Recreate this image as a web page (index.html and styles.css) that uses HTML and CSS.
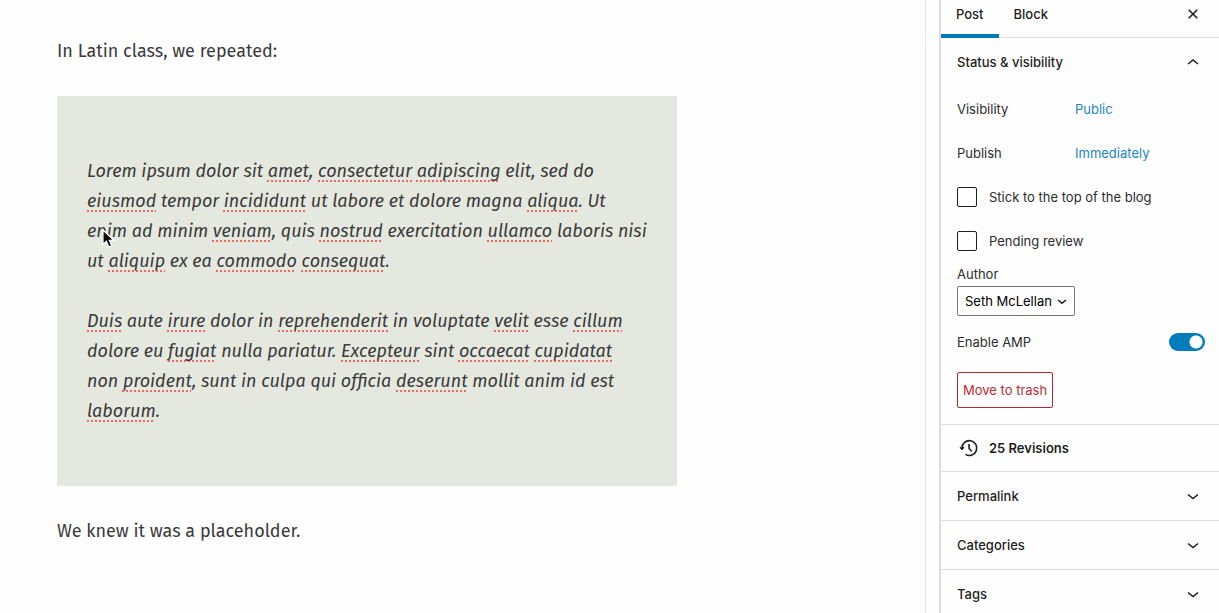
FILE: index.html
```html
<!DOCTYPE html>
<html lang="en">
<head>
<meta charset="utf-8">
<title>Edit Post</title>
<link rel="stylesheet" href="styles.css">
</head>
<body>
<div class="editor">
  <main class="canvas">
    <p class="para">In Latin class, we repeated:</p>
    <blockquote class="quote">
      <p class="quote-text">Lorem ipsum dolor sit <u>amet</u>, <u>consectetur</u> <u>adipiscing</u> elit, sed do<br><u>eiusmod</u> tempor <u>incididunt</u> ut labore et dolore magna <u>aliqua</u>. Ut<br>enim ad minim <u>veniam</u>, quis <u>nostrud</u> exercitation <u>ullamco</u> laboris nisi<br>ut <u>aliquip</u> ex ea <u>commodo</u> <u>consequat</u>.</p>
      <p class="quote-text"><u>Duis</u> aute <u>irure</u> dolor in <u>reprehenderit</u> in voluptate <u>velit</u> esse <u>cillum</u><br>dolore eu <u>fugiat</u> nulla pariatur. <u>Excepteur</u> sint <u>occaecat</u> <u>cupidatat</u><br>non <u>proident</u>, sunt in culpa qui officia <u>deserunt</u> mollit anim id est<br><u>laborum</u>.</p>
      <svg class="pointer" width="14" height="20" viewBox="0 0 14 20" aria-hidden="true"><path d="M2 1v14.500l3.400-3.200 2.400 5.600 2.900-1.200-2.400-5.400h4.500z" fill="#000" stroke="#fff" stroke-width="1.200"/></svg>
    </blockquote>
    <p class="para">We knew it was a placeholder.</p>
  </main>
  <aside class="sidebar">
    <header class="tabs">
      <button class="tab tab-active" type="button">Post</button>
      <button class="tab" type="button">Block</button>
      <button class="close" type="button" aria-label="Close settings"><svg width="12" height="12" viewBox="0 0 12 12"><path d="M1.700 1.700l8.600 8.600M10.300 1.700l-8.600 8.600"/></svg></button>
    </header>
    <section class="status">
      <button class="panel-title" type="button" aria-expanded="true">Status &amp; visibility<svg width="12" height="8" viewBox="0 0 12 8"><path d="M1 6l5-4L11 6"/></svg></button>
      <div class="row"><span class="row-name">Visibility</span><a class="link" href="#visibility">Public</a></div>
      <div class="row"><span class="row-name">Publish</span><a class="link" href="#publish">Immediately</a></div>
      <label class="row"><input class="check" type="checkbox">Stick to the top of the blog</label>
      <label class="row"><input class="check" type="checkbox">Pending review</label>
      <div class="author">
        <label class="author-label" for="author">Author</label>
        <div class="select-wrap">
          <select class="select" id="author"><option>Seth McLellan</option></select>
          <svg class="select-arrow" width="10" height="6" viewBox="0 0 10 6" aria-hidden="true"><path d="M1 1l4 3.300L9 1"/></svg>
        </div>
      </div>
      <label class="amp">Enable AMP<input class="toggle" type="checkbox" checked></label>
      <button class="trash" type="button">Move to trash</button>
    </section>
    <a class="revisions" href="#revisions"><svg width="24" height="24" viewBox="0 0 24 24" aria-hidden="true"><path d="M5 12.200A7.400 7.400 0 1 1 8.600 18.400M12 8v4.200l2.700 3.200"/><path d="M3 11.600h4L5 14z" fill="#1e1e1e" stroke-width="0.800"/></svg>25 Revisions</a>
    <button class="panel-title panel-closed" type="button">Permalink<svg width="12" height="8" viewBox="0 0 12 8"><path d="M1 2.500l5 4L11 2.500"/></svg></button>
    <button class="panel-title panel-closed" type="button">Categories<svg width="12" height="8" viewBox="0 0 12 8"><path d="M1 2.500l5 4L11 2.500"/></svg></button>
    <button class="panel-title panel-closed" type="button">Tags<svg width="12" height="8" viewBox="0 0 12 8"><path d="M1 2.500l5 4L11 2.500"/></svg></button>
  </aside>
</div>
</body>
</html>
```
FILE: styles.css
```css
* { box-sizing: border-box; }
body { margin: 0; background: #fefefe; overflow: hidden; }
button, select { font: inherit; color: inherit; }
svg { fill: none; stroke: #1e1e1e; stroke-width: 1.6; flex: none; }

.editor { display: flex; height: 100vh; }

.canvas {
  flex: 1;
  min-width: 0;
  padding: 36px 57px;
  border-right: 1px solid #e6e6e6;
  font: 18px/30px "Fira Sans", "Noto Sans", sans-serif;
  color: #3a3a3a;
}
.para { margin: 0; }
.quote {
  position: relative;
  max-width: 620px;
  margin: 30px 0;
  padding: 60px 30px;
  background: #e5e8df;
  font-style: italic;
  white-space: nowrap;
}
.quote-text { margin: 0; }
.quote-text + .quote-text { margin-top: 30px; }
.quote-text u {
  text-decoration: underline dotted #ed6a5e 2px;
  text-decoration-skip-ink: none;
  text-underline-offset: 3px;
}
.pointer { position: absolute; left: 44px; top: 133px; }

.sidebar {
  width: 280px;
  margin-left: 13px;
  border-left: 2px solid #dcdcdc;
  font: 13px/20px Inter, sans-serif;
  color: #2c2c2c;
}
.tabs {
  display: flex;
  height: 38px;
  border-bottom: 1px solid #ddd;
  font-weight: 500;
  color: #1e1e1e;
}
.tab {
  height: 38px;
  padding: 0 15px 6px;
  border: 0;
  border-bottom: 4px solid transparent;
  background: none;
}
.tab-active { border-color: #007cba; }
.close {
  display: flex;
  margin-left: auto;
  padding: 8px 20px;
  border: 0;
  background: none;
}
.status { padding-bottom: 16px; }
.panel-title {
  display: flex;
  align-items: center;
  justify-content: space-between;
  width: 100%;
  height: 49px;
  padding: 0 20px 0 16px;
  border: 0;
  background: none;
  font-weight: 500;
  color: #1e1e1e;
}
.status .panel-title { padding-bottom: 2px; }
.panel-closed { border-top: 1px solid #ddd; }
.row { display: flex; align-items: center; height: 44px; padding: 0 16px; }
.row-name { width: 118px; }
.link { color: #1a84c4; text-decoration: none; }
.check {
  appearance: none;
  width: 20px;
  height: 20px;
  margin: 0 12px 0 0;
  border: 1px solid #1e1e1e;
  border-radius: 2px;
  background: #fff;
}
.author { padding: 1px 16px 0; }
.author-label { display: block; height: 22px; }
.select-wrap { position: relative; width: 118px; }
.select {
  appearance: none;
  display: block;
  width: 100%;
  height: 30px;
  padding: 0 7px;
  border: 1px solid #757575;
  border-radius: 2px;
  background: #fff;
  color: #000;
}
.select-arrow { position: absolute; right: 8px; top: 13px; }
.amp {
  display: flex;
  align-items: center;
  justify-content: space-between;
  padding: 16px 14px 20px 16px;
}
.toggle {
  appearance: none;
  width: 36px;
  height: 18px;
  margin: 0;
  border-radius: 9px;
  background: radial-gradient(circle at 27px 9px, #fff 6px, #007cba 7px);
}
.trash {
  display: block;
  height: 36px;
  margin-left: 16px;
  padding: 0 5px;
  border: 1px solid #b9252b;
  border-radius: 2px;
  background: #fff;
  color: #c02b30;
}
.revisions {
  display: flex;
  align-items: center;
  gap: 8px;
  height: 47px;
  padding: 0 16px;
  border-top: 1px solid #ddd;
  font-weight: 600;
  color: #1e1e1e;
  text-decoration: none;
}
```
